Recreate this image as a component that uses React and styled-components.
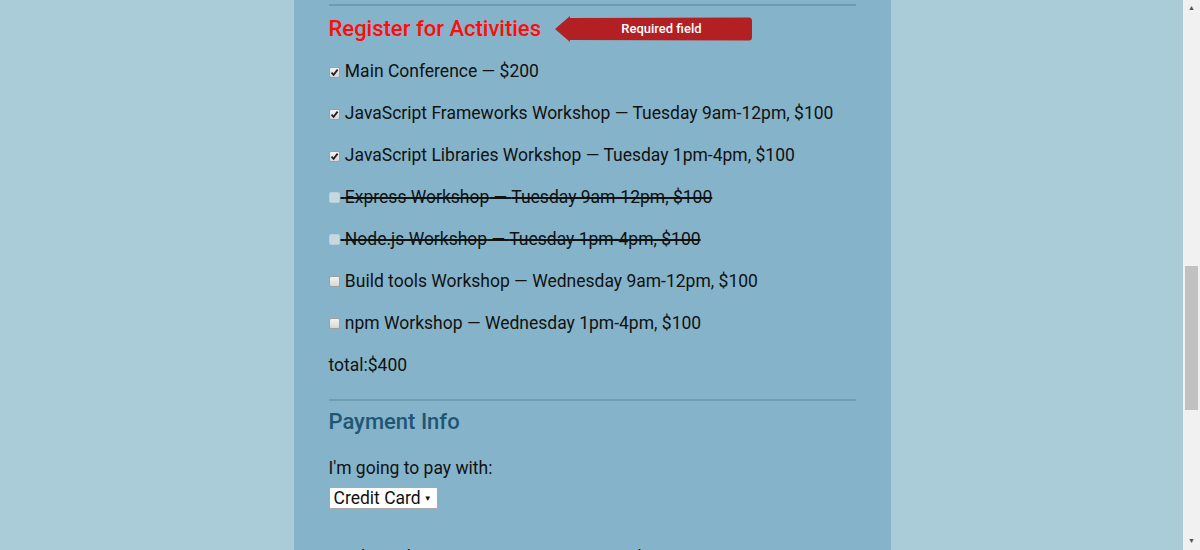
import React from 'react';
import styled, { createGlobalStyle } from 'styled-components';

const activities = [
  { name: 'Main Conference', when: '$200', checked: true },
  { name: 'JavaScript Frameworks Workshop', when: 'Tuesday 9am-12pm, $100', checked: true },
  { name: 'JavaScript Libraries Workshop', when: 'Tuesday 1pm-4pm, $100', checked: true },
  { name: 'Express Workshop', when: 'Tuesday 9am-12pm, $100', disabled: true },
  { name: 'Node.js Workshop', when: 'Tuesday 1pm-4pm, $100', disabled: true },
  { name: 'Build tools Workshop', when: 'Wednesday 9am-12pm, $100' },
  { name: 'npm Workshop', when: 'Wednesday 1pm-4pm, $100' },
];

function Check({ checked, disabled }) {
  return (
    <Box $disabled={disabled}>
      {checked && (
        <svg width="9" height="9" viewBox="0 0 9 9">
          <path d="M1.5 4.6 L3.6 6.8 L7.6 1.6" fill="none" stroke="#222" strokeWidth="1.8" />
        </svg>
      )}
    </Box>
  );
}

function App() {
  return (
    <>
      <GlobalStyle />
      <Screen>
        <Page>
          <Panel>
            <Divider />
            <HeadingRow>
              <Legend>Register for Activities</Legend>
              <Tip>
                <svg width="198" height="26" viewBox="0 0 198 26">
                  <path d="M0 13 L15 0 L15 2 L194 1.5 Q197 1.5 197 5 L197 21 Q197 24.5 194 24.5 L15 24 L15 26 Z" fill="#b22024" />
                </svg>
                <TipText>Required field</TipText>
              </Tip>
            </HeadingRow>
            {activities.map((a, i) => (
              <Activity key={i} $disabled={a.disabled}>
                <Check checked={a.checked} disabled={a.disabled} /> {a.name} — {a.when}
              </Activity>
            ))}
            <Total>total:$400</Total>
            <Divider $gap={13} />
            <SectionTitle>Payment Info</SectionTitle>
            <Label>I'm going to pay with:</Label>
            <Select>
              Credit Card <Caret>▼</Caret>
            </Select>
            <CardRow>
              <span>Card Number:</span>
              <span>Zip Code:</span>
            </CardRow>
          </Panel>
        </Page>
        <Scrollbar>
          <Arrow>▲</Arrow>
          <Track>
            <Thumb />
          </Track>
          <Arrow>▼</Arrow>
        </Scrollbar>
      </Screen>
    </>
  );
}

const GlobalStyle = createGlobalStyle`
  html, body {
    margin: 0;
    padding: 0;
    height: 550px;
    overflow: hidden;
    background: #aacbd8;
    font-family: Roboto, "Liberation Sans", sans-serif;
  }
`;
const Screen = styled.div`
  display: flex;
  width: 1200px;
  height: 550px;
  overflow: hidden;
`;
const Page = styled.div`
  flex: 1;
  display: flex;
  justify-content: center;
  padding-left: 1px;
`;
const Panel = styled.div`
  width: 527px;
  padding: 4px 35px 0;
  background: #85b4ca;
  color: #111;
  font-size: 17.5px;
`;
const Divider = styled.div`
  height: 2px;
  background: #6d9db3;
  margin-top: ${p => p.$gap || 0}px;
`;
const HeadingRow = styled.div`
  display: flex;
  align-items: center;
  height: 44px;
`;
const Legend = styled.h2`
  margin: 0;
  font-size: 22px;
  font-weight: 500;
  color: #ff0c0c;
`;
const Tip = styled.div`
  position: relative;
  margin-left: 14px;
  margin-top: 2px;
  width: 198px;
  height: 26px;
  svg { display: block; }
`;
const TipText = styled.span`
  position: absolute;
  left: 15px;
  right: 0;
  top: 0;
  line-height: 25px;
  text-align: center;
  color: #fff;
  font-size: 13px;
  font-weight: 500;
`;
const Activity = styled.label`
  display: block;
  height: 42px;
  line-height: 42px;
  white-space: nowrap;
  text-decoration: ${p => (p.$disabled ? 'line-through' : 'none')};
  text-decoration-thickness: 2px;
`;
const Box = styled.span`
  display: inline-flex;
  align-items: center;
  justify-content: center;
  width: 11px;
  height: 11px;
  margin-right: 1px;
  box-sizing: border-box;
  vertical-align: 0;
  border: 1px solid ${p => (p.$disabled ? '#b9cfd9' : '#a0a0a0')};
  border-radius: 2px;
  background: ${p => (p.$disabled ? '#c6d9e2' : 'linear-gradient(#f2f2f2, #d8d8d8)')};
`;
const Total = styled.div`
  height: 42px;
  line-height: 42px;
`;
const SectionTitle = styled.h3`
  margin: 0;
  height: 42px;
  line-height: 42px;
  font-size: 22px;
  font-weight: 500;
  color: #1f5673;
`;
const Label = styled.div`
  margin-top: 10px;
  line-height: 30px;
`;
const Select = styled.div`
  display: inline-flex;
  align-items: center;
  margin-top: 4px;
  height: 22px;
  box-sizing: border-box;
  padding: 0 5px 0 4px;
  background: #fff;
  border: 1px solid #a9a9a9;
  font-size: 17.5px;
`;
const Caret = styled.span`
  font-size: 8px;
  margin-left: 3px;
`;
const CardRow = styled.div`
  display: grid;
  grid-template-columns: 253px auto;
  margin-top: 38px;
  line-height: 20px;
`;
const Scrollbar = styled.div`
  width: 17px;
  display: flex;
  flex-direction: column;
  background: #f1f1f1;
`;
const Arrow = styled.div`
  height: 17px;
  font-size: 7px;
  line-height: 17px;
  text-align: center;
  color: #505050;
`;
const Track = styled.div`
  flex: 1;
  padding-top: 249px;
`;
const Thumb = styled.div`
  margin: 0 2px;
  height: 144px;
  background: #c1c1c1;
`;

export default App;
